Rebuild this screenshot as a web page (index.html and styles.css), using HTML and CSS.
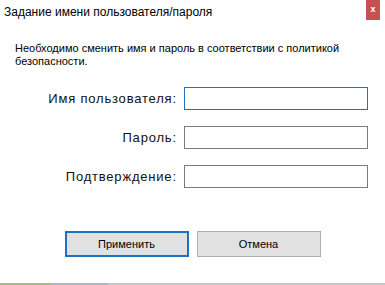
FILE: index.html
```html
<!DOCTYPE html>
<html>
<head>
<meta charset="utf-8">
<link rel="stylesheet" href="styles.css">
</head>
<body>
<div class="window">
  <div class="titlebar">
    <div class="title">Задание имени пользователя/пароля</div>
    <div class="close">x</div>
  </div>
  <div class="message">Необходимо сменить имя и пароль в соответствии с политикой безопасности.</div>
  <div class="form">
    <label class="label">Имя пользователя:</label>
    <div class="input focused"></div>
    <label class="label">Пароль:</label>
    <div class="input"></div>
    <label class="label">Подтверждение:</label>
    <div class="input"></div>
  </div>
  <div class="buttons">
    <div class="btn primary">Применить</div>
    <div class="btn">Отмена</div>
  </div>
  <div class="strip"><span class="seg1"></span><span class="seg2"></span><span class="seg3"></span></div>
</div>
</body>
</html>
```
FILE: styles.css
```css
html, body {
  margin: 0;
  padding: 0;
  background: #fff;
}
.window {
  width: 385px;
  height: 285px;
  overflow: hidden;
  display: flex;
  flex-direction: column;
  font-family: "Liberation Sans", Arial, sans-serif;
  color: #000;
  background: #fff;
}
.titlebar {
  height: 22px;
  display: flex;
  align-items: flex-start;
  justify-content: space-between;
}
.title {
  font-size: 12px;
  line-height: 14px;
  padding: 5px 0 0 4px;
}
.close {
  width: 14px;
  height: 20px;
  margin-right: 5px;
  background: #c75050;
  color: #fff;
  font-size: 9px;
  font-weight: bold;
  line-height: 19px;
  text-align: center;
}
.message {
  margin: 20px 30px 0 15px;
  font-size: 11px;
  line-height: 13px;
}
.form {
  margin-top: 19px;
  display: grid;
  grid-template-columns: 176px 184px;
  column-gap: 8px;
  row-gap: 16px;
  align-items: center;
}
.label {
  text-align: right;
  font-size: 13px;
  line-height: 16px;
  letter-spacing: 0.8px;
  margin-right: -0.8px;
  color: #111;
}
.input {
  height: 21px;
  border: 1px solid #7a7a7a;
  background: #fff;
}
.input.focused {
  border-color: #1a73c6;
}
.buttons {
  margin-top: 43px;
  display: flex;
  justify-content: center;
  gap: 8px;
}
.btn {
  width: 122px;
  height: 24px;
  border: 1px solid #adadad;
  background: #e1e1e1;
  font-size: 11px;
  line-height: 24px;
  text-align: center;
}
.btn.primary {
  width: 120px;
  height: 22px;
  line-height: 22px;
  border: 2px solid #1a73c6;
}
.strip {
  margin-top: auto;
  height: 2px;
  display: flex;
}
.seg1 { width: 50px; background: #a7b98a; }
.seg2 { width: 58px; background: #a9b9bd; }
.seg3 { flex: 1; background: #c6c6c6; }
```
